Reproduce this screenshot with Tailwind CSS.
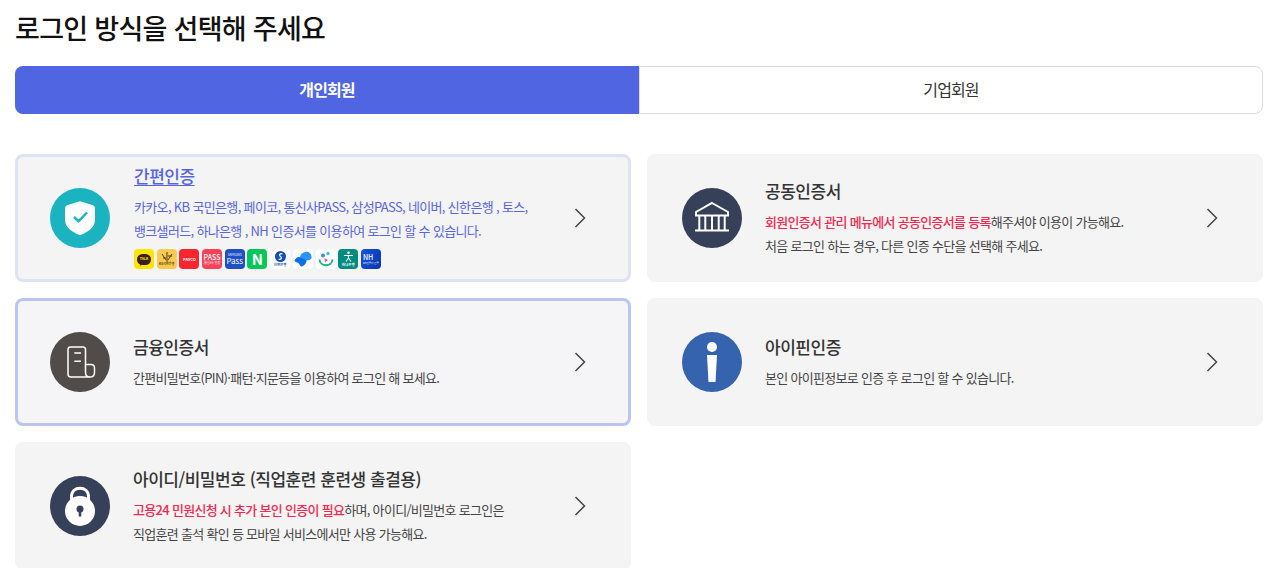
<!DOCTYPE html>
<html lang="ko">
<head>
<meta charset="utf-8">
<script src="https://cdn.jsdelivr.net/npm/@tailwindcss/browser@4"></script>
</head>
<body class="h-[568px] overflow-hidden bg-white font-['Noto_Sans_CJK_KR','Noto_Sans',sans-serif] text-[#333]">
<main class="px-[15px]">
  <h1 class="h-[66px] pt-[8px] text-[27px] leading-[40px] font-medium tracking-[-0.7px] text-[#111]">로그인 방식을 선택해 주세요</h1>
  <div class="flex h-[48px] w-[1248px]">
    <div class="flex w-[624px] items-center justify-center rounded-l-lg bg-[#4f65e1] pb-[2px] text-[16px] font-bold tracking-[-0.9px] text-white">개인회원</div>
    <div class="flex w-[624px] items-center justify-center rounded-r-lg border border-[#dcdcdc] pb-[2px] text-[16px] tracking-[-0.9px] text-[#333]">기업회원</div>
  </div>
  <div class="mt-[40px] grid w-[1248px] grid-cols-2 gap-4">

    <a class="flex h-[128px] items-center rounded-lg border-[3px] border-[#dfe2f4] bg-[#f4f4f4] pl-[32px] pr-[42px]">
      <svg class="h-[60px] w-[60px] shrink-0" viewBox="0 0 60 60"><circle cx="30" cy="30" r="30" fill="#1ab3bf"/><path d="M30 13.300 L42.500 17 Q45 18 45 20 V32 C45 39.500 37 44.500 30 47.300 C23 44.500 15 39.500 15 32 V20 Q15 18 17.500 17 Z" fill="#fff"/><path d="M24 29 L28.500 33.300 L37 24.500" fill="none" stroke="#1ab3bf" stroke-width="2.500"/></svg>
      <div class="ml-[24px] flex-1 pb-[4px] text-[#5766e0]">
        <p class="text-[17px] leading-[26px] font-medium tracking-[-0.47px] underline underline-offset-2">간편인증</p>
        <p class="mt-[6px] text-[13px] leading-[24px] tracking-[-0.66px]">카카오, KB 국민은행, 페이코, 통신사PASS, 삼성PASS, 네이버, 신한은행 , 토스,<br>뱅크샐러드, 하나은행 , NH 인증서를 이용하여 로그인 할 수 있습니다.</p>
        <div class="mt-[6px] flex gap-[2.700px]">
          <span class="relative flex h-5 w-5 items-center justify-center rounded-[4px] bg-[#fee500]"><span class="flex h-[11px] w-[14px] items-center justify-center rounded-full bg-[#3c1e1e] text-[3.500px] font-bold text-[#fee500]">TALK</span><svg class="absolute left-[6px] top-[14px] h-[3px] w-[3px]" viewBox="0 0 3 3"><path d="M0 0H3L0.500 3Z" fill="#3c1e1e"/></svg></span>
          <span class="flex h-5 w-5 flex-col items-center justify-center rounded-[4px] bg-[#fcc94f] text-[#4d3d1b]"><svg class="h-[10px] w-[12px]" viewBox="0 0 12 10"><path d="M6 0V10M1 2L5 8M11 2L7 8M2 6H5M7 4H11" stroke="currentColor" stroke-width="1" fill="none"/></svg><span class="text-[3px] leading-[5px] font-bold">KB국민은행</span></span>
          <span class="flex h-5 w-5 items-center justify-center rounded-[4px] bg-[#fb2530] text-[4px] font-bold text-white">PAYCO</span>
          <span class="flex h-5 w-5 flex-col items-center justify-center rounded-[4px] bg-[#f9425a] text-white"><span class="text-[7px] leading-[8px] font-medium">PASS</span><span class="text-[3px] leading-[4px]">통신3사 인증</span></span>
          <span class="flex h-5 w-5 flex-col items-center justify-center rounded-[4px] bg-[#1e4fc4] text-white"><span class="text-[3px] leading-[4px]">SAMSUNG</span><span class="text-[8px] leading-[8px]">Pass</span></span>
          <span class="flex h-5 w-5 items-center justify-center rounded-[4px] bg-[#03c75a] text-[15px] font-bold text-white">N</span>
          <span class="flex h-5 w-5 flex-col items-center justify-center rounded-[4px] bg-white text-[#1550b8]"><svg class="h-[11px] w-[11px]" viewBox="0 0 11 11"><circle cx="5.500" cy="5.500" r="5.500" fill="#1550b8"/><path d="M7.500 3 C5 2 3.500 4 5.500 5.500 C7.500 7 6 9 3.500 8" fill="none" stroke="#fff" stroke-width="1.200"/></svg><span class="text-[3.500px] leading-[5px] font-bold">신한은행</span></span>
          <span class="flex h-5 w-5 items-center justify-center rounded-[4px] bg-white"><svg class="h-[18px] w-[18px]" viewBox="0 0 18 18"><path d="M11 2 C15 1 18 4 17.500 8 C17 11 11 11.500 6.500 8.500 C5.500 6 7 3 11 2Z" fill="#2b94f5"/><path d="M1 9.500 C3 6.500 5 6.500 7 7.500 L12.500 10.500 C12.500 14 9 16.500 7.500 16.500 C5.500 16.500 6 13 3 12.500 C1 12 0 11 1 9.500Z" fill="#0f6fe8"/></svg></span>
          <span class="flex h-5 w-5 items-center justify-center rounded-[4px] bg-white"><svg class="h-[18px] w-[18px]" viewBox="0 0 18 18"><circle cx="6" cy="5.500" r="2" fill="#3b8df0"/><circle cx="11" cy="3.500" r="1.700" fill="#3bc1d6"/><path d="M2.500 9.500 C3 17 15 17 15.500 9.500" fill="none" stroke="#12b886" stroke-width="2"/><path d="M7.500 8 L11 10 L8 12.500 Z" fill="#f2569a"/></svg></span>
          <span class="flex h-5 w-5 flex-col items-center justify-center rounded-[4px] bg-[#008a80] text-white"><svg class="h-[11px] w-[11px]" viewBox="0 0 11 11"><circle cx="5.500" cy="1.800" r="1.300" fill="#fff"/><path d="M1 4.500H10M5.500 4V7L3 10.500M5.500 7L8 10.500" stroke="#fff" stroke-width="1.100" fill="none"/></svg><span class="text-[3.500px] leading-[5px] font-bold">하나은행</span></span>
          <span class="flex h-5 w-5 flex-col justify-center overflow-hidden rounded-[4px] bg-[linear-gradient(120deg,#1652e0,#0636a8)] pl-[2px] text-white"><span class="text-[7px] leading-[8px] font-medium">NH</span><span class="text-[2.500px] leading-[4px] whitespace-nowrap">NH인증서 인증</span></span>
        </div>
      </div>
      <svg class="h-[20px] w-[12px] shrink-0" viewBox="0 0 12 20"><path d="M1.500 1 L10.500 10 L1.500 19" fill="none" stroke="#444" stroke-width="1.500"/></svg>
    </a>

    <a class="flex h-[128px] items-center rounded-lg bg-[#f4f4f4] pl-[35px] pr-[45px]">
      <svg class="h-[60px] w-[60px] shrink-0" viewBox="0 0 60 60"><circle cx="30" cy="30" r="30" fill="#374059"/><path d="M30 15 L46 24 V27.500 H14 V24 Z" fill="none" stroke="#fff" stroke-width="2"/><path d="M17.300 28V42M23.300 28V42M30 28V42M36.700 28V42M42.700 28V42" stroke="#fff" stroke-width="2"/><path d="M13 42.500H47" stroke="#fff" stroke-width="2"/></svg>
      <div class="ml-[23px] flex-1">
        <p class="text-[17px] leading-[26px] font-medium tracking-[-0.47px] text-[#333]">공동인증서</p>
        <p class="mt-[6px] text-[13px] leading-[24px] tracking-[-0.7px] text-[#444]"><span class="font-medium text-[#f5274f]">회원인증서 관리 메뉴에서 공동인증서를 등록</span>해주셔야 이용이 가능해요.<br>처음 로그인 하는 경우, 다른 인증 수단을 선택해 주세요.</p>
      </div>
      <svg class="h-[20px] w-[12px] shrink-0" viewBox="0 0 12 20"><path d="M1.500 1 L10.500 10 L1.500 19" fill="none" stroke="#444" stroke-width="1.500"/></svg>
    </a>

    <a class="flex h-[128px] items-center rounded-lg border-[3px] border-[#bcc4ef] bg-[#f5f5f8] pl-[32px] pr-[42px]">
      <svg class="h-[60px] w-[60px] shrink-0" viewBox="0 0 60 60"><circle cx="30" cy="30" r="30" fill="#514c4a"/><path d="M40 45 H21 Q18 45 18 42 V17.500 Q18 15 20.500 15 H33 Q35.500 15 35.500 17.500 V40.500 Q35.500 45 40 45 Q44.500 45 44.500 40.500 V36 Q44.500 32.500 41 32.500 H35.500" fill="none" stroke="#fff" stroke-width="1.500"/><path d="M24.300 21H31M24.300 29.300H31" stroke="#fff" stroke-width="1.500"/></svg>
      <div class="ml-[23px] flex-1">
        <p class="text-[17px] leading-[26px] font-medium tracking-[-0.47px] text-[#333]">금융인증서</p>
        <p class="mt-[6px] text-[13px] leading-[24px] tracking-[-0.7px] text-[#444]">간편비밀번호(PIN)·패턴·지문등을 이용하여 로그인 해 보세요.</p>
      </div>
      <svg class="h-[20px] w-[12px] shrink-0" viewBox="0 0 12 20"><path d="M1.500 1 L10.500 10 L1.500 19" fill="none" stroke="#444" stroke-width="1.500"/></svg>
    </a>

    <a class="flex h-[128px] items-center rounded-lg bg-[#f4f4f4] pl-[35px] pr-[45px]">
      <svg class="h-[60px] w-[60px] shrink-0" viewBox="0 0 60 60"><circle cx="30" cy="30" r="30" fill="#3663ae"/><circle cx="30" cy="15" r="5" fill="#fff"/><path d="M25 23H35L33.500 50H26.500Z" fill="#fff"/></svg>
      <div class="ml-[23px] flex-1">
        <p class="text-[17px] leading-[26px] font-medium tracking-[-0.47px] text-[#333]">아이핀인증</p>
        <p class="mt-[6px] text-[13px] leading-[24px] tracking-[-0.7px] text-[#444]">본인 아이핀정보로 인증 후 로그인 할 수 있습니다.</p>
      </div>
      <svg class="h-[20px] w-[12px] shrink-0" viewBox="0 0 12 20"><path d="M1.500 1 L10.500 10 L1.500 19" fill="none" stroke="#444" stroke-width="1.500"/></svg>
    </a>

    <a class="flex h-[128px] items-center rounded-lg bg-[#f4f4f4] pl-[35px] pr-[45px]">
      <svg class="h-[60px] w-[60px] shrink-0" viewBox="0 0 60 60"><circle cx="30" cy="30" r="30" fill="#374059"/><path d="M21.500 26 V21 C21.500 15 25.500 12.300 30 12.300 C34.500 12.300 38.500 15 38.500 21 V26" fill="none" stroke="#fff" stroke-width="3"/><circle cx="30" cy="35" r="15" fill="#fff"/><circle cx="30" cy="33" r="3.500" fill="#374059"/><path d="M28.700 34H31.300L31.300 40.500H28.700Z" fill="#374059"/></svg>
      <div class="ml-[23px] flex-1">
        <p class="text-[17px] leading-[26px] font-medium tracking-[-0.47px] text-[#333]">아이디/비밀번호 (직업훈련 훈련생 출결용)</p>
        <p class="mt-[6px] text-[13px] leading-[24px] tracking-[-0.7px] text-[#444]"><span class="font-medium text-[#f5274f]">고용24 민원신청 시 추가 본인 인증이 필요</span>하며, 아이디/비밀번호 로그인은<br>직업훈련 출석 확인 등 모바일 서비스에서만 사용 가능해요.</p>
      </div>
      <svg class="h-[20px] w-[12px] shrink-0" viewBox="0 0 12 20"><path d="M1.500 1 L10.500 10 L1.500 19" fill="none" stroke="#444" stroke-width="1.500"/></svg>
    </a>
  </div>
</main>
</body>
</html>
